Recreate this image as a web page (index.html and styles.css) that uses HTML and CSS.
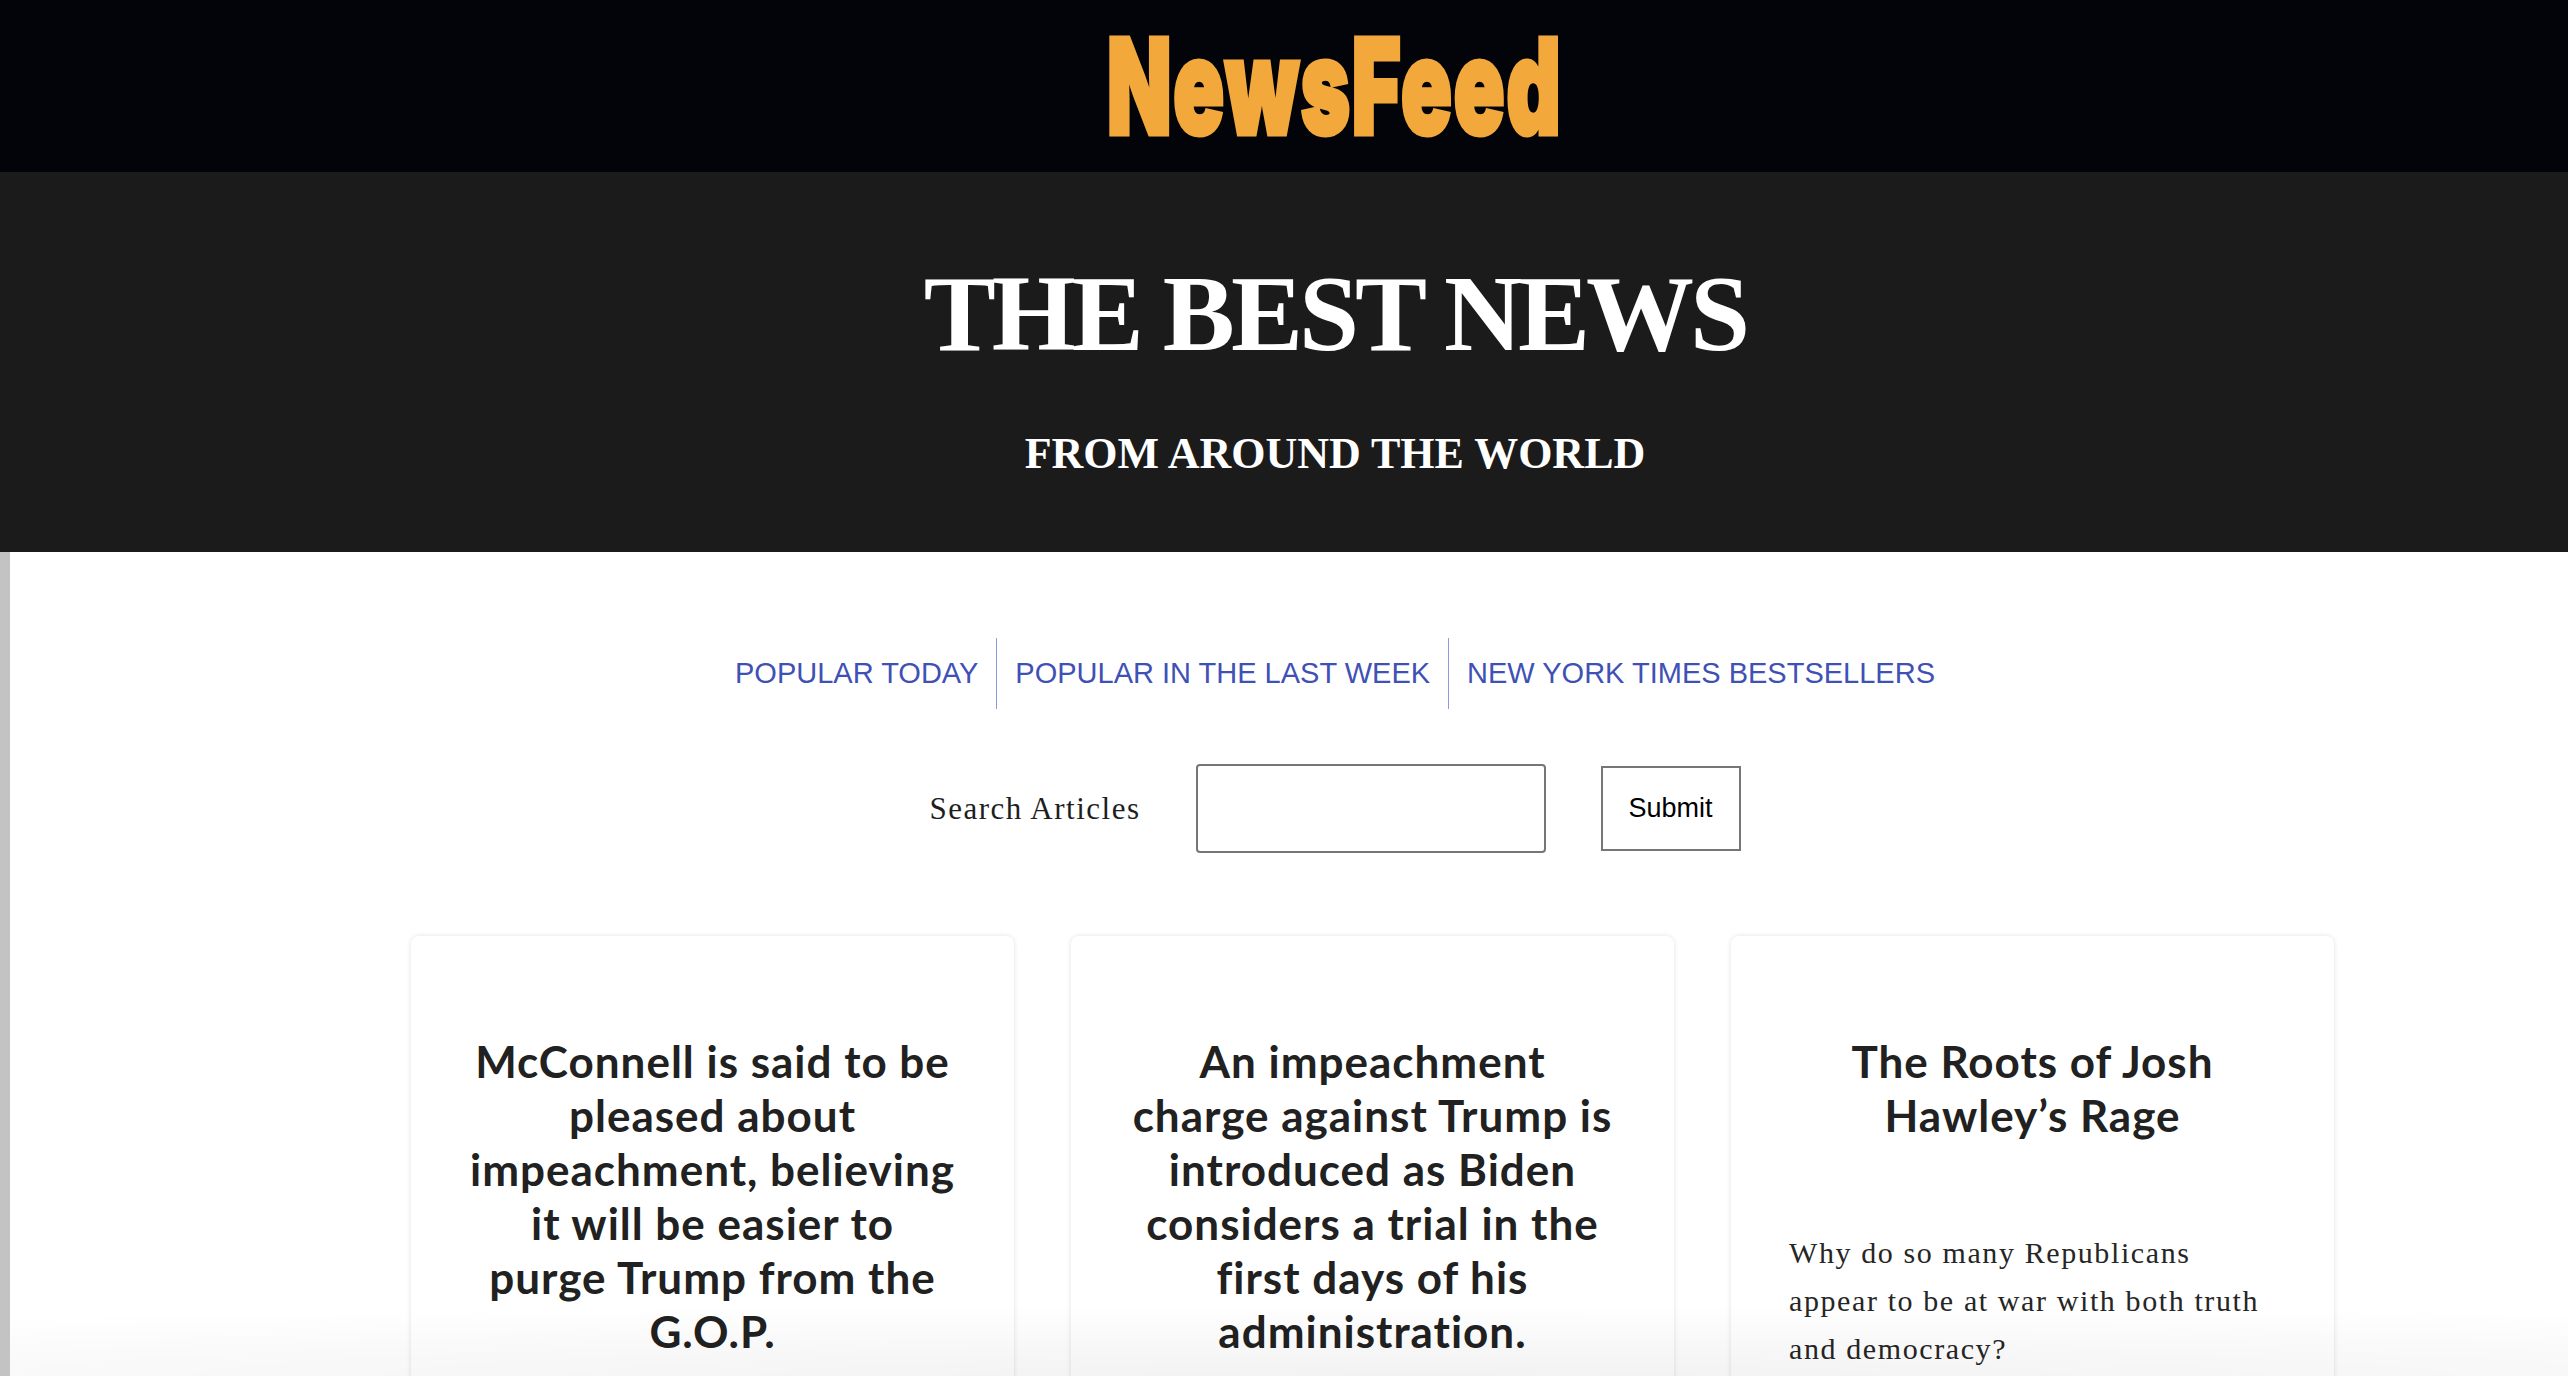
FILE: index.html
```html
<!DOCTYPE html>
<html lang="en">
<head>
<meta charset="utf-8">
<title>NewsFeed</title>
<link rel="stylesheet" href="styles.css">
</head>
<body>
<header class="topbar">
  <div class="brand">NewsFeed</div>
</header>
<section class="hero">
  <h1 class="hero-title">THE BEST NEWS</h1>
  <h2 class="hero-sub">FROM AROUND THE WORLD</h2>
</section>
<main class="main">
  <nav class="tabs">
    <a class="tab" href="#">POPULAR TODAY</a>
    <a class="tab" href="#">POPULAR IN THE LAST WEEK</a>
    <a class="tab" href="#">NEW YORK TIMES BESTSELLERS</a>
  </nav>
  <form class="search">
    <label class="search-label" for="q">Search Articles</label>
    <input class="search-input" id="q" type="text">
    <button class="search-btn" type="button">Submit</button>
  </form>
  <div class="cards">
    <article class="card">
      <h3 class="card-title">McConnell is said to be pleased about impeachment, believing it will be easier to purge Trump from the G.O.P.</h3>
    </article>
    <article class="card">
      <h3 class="card-title">An impeachment charge against Trump is introduced as Biden considers a trial in the first days of his administration.</h3>
    </article>
    <article class="card">
      <h3 class="card-title">The Roots of Josh Hawley’s Rage</h3>
      <p class="card-text">Why do so many Republicans appear to be at war with both truth and democracy?</p>
    </article>
  </div>
</main>
<div class="fade"></div>
</body>
</html>
```

FILE: styles.css
```css
* { box-sizing: border-box; }
html, body { margin: 0; padding: 0; }
body {
  background: #ffffff;
  font-family: "Liberation Serif", serif;
  overflow: hidden;
}
.topbar {
  height: 172px;
  background: #03040a;
  display: flex;
  align-items: center;
  justify-content: center;
  padding-left: 102px;
}
.brand {
  display: inline-block;
  font-family: "Inter", "DejaVu Sans", sans-serif;
  font-weight: 900;
  font-size: 132px;
  line-height: 1;
  color: #f2a83b;
  -webkit-text-stroke: 5px #f2a83b;
  letter-spacing: 3px;
  transform: scaleX(0.635);
}
.hero {
  background: #1b1b1b;
  padding: 88px 0 76px 102px;
  text-align: center;
  color: #ffffff;
}
.hero-title {
  margin: 0;
  font-family: "Liberation Serif", serif;
  font-weight: 700;
  font-size: 108px;
  line-height: 108px;
  letter-spacing: -4px;
}
.hero-sub {
  margin: 64px 0 0;
  font-family: "Liberation Serif", serif;
  font-weight: 700;
  font-size: 44px;
  line-height: 44px;
}
.main {
  border-left: 10px solid #c4c3c4;
  padding: 86px 0 0 92px;
  min-height: 900px;
}
.tabs {
  display: flex;
  justify-content: center;
}
.tab {
  display: block;
  height: 71px;
  line-height: 71px;
  padding: 0 18px;
  font-family: "Liberation Sans", Arial, sans-serif;
  font-size: 29px;
  color: #3f51b5;
  text-decoration: none;
  border-left: 1px solid #8d9be0;
}
.tab:first-child { border-left: none; }
.search {
  margin: 55px 0 0;
  display: flex;
  justify-content: center;
  align-items: center;
  gap: 55px;
}
.search-label {
  font-family: "Liberation Serif", serif;
  font-size: 31px;
  letter-spacing: 1.5px;
  color: #1e1e1e;
}
.search-input {
  width: 350px;
  height: 89px;
  border: 2px solid #767676;
  border-radius: 4px;
  background: #fff;
}
.search-btn {
  width: 140px;
  height: 85px;
  border: 2px solid #767676;
  background: #fff;
  font-family: "Liberation Sans", Arial, sans-serif;
  font-size: 27px;
  color: #000;
  padding: 0;
}
.cards {
  margin-top: 83px;
  padding-left: 75px;
  display: grid;
  grid-template-columns: repeat(3, 603px);
  justify-content: center;
  gap: 57px;
}
.card {
  background: #fff;
  border-radius: 8px;
  box-shadow: 0 0 5px rgba(0, 0, 0, 0.12);
  min-height: 700px;
  padding: 98px 58px 40px;
}
.card-title {
  margin: 0 0 87px;
  font-family: "Lato", "Open Sans", sans-serif;
  font-weight: 700;
  font-size: 44px;
  line-height: 54px;
  letter-spacing: 1px;
  text-align: center;
  color: #212121;
}
.card-text {
  margin: 0;
  font-family: "Liberation Serif", serif;
  font-size: 30px;
  line-height: 48px;
  letter-spacing: 1.6px;
  color: #262626;
}
.fade {
  position: fixed;
  left: 10px;
  right: 0;
  bottom: 0;
  height: 90px;
  pointer-events: none;
  background: radial-gradient(120% 100% at 55% 100%, rgba(0, 0, 0, 0.05), rgba(0, 0, 0, 0) 80%);
}
```
